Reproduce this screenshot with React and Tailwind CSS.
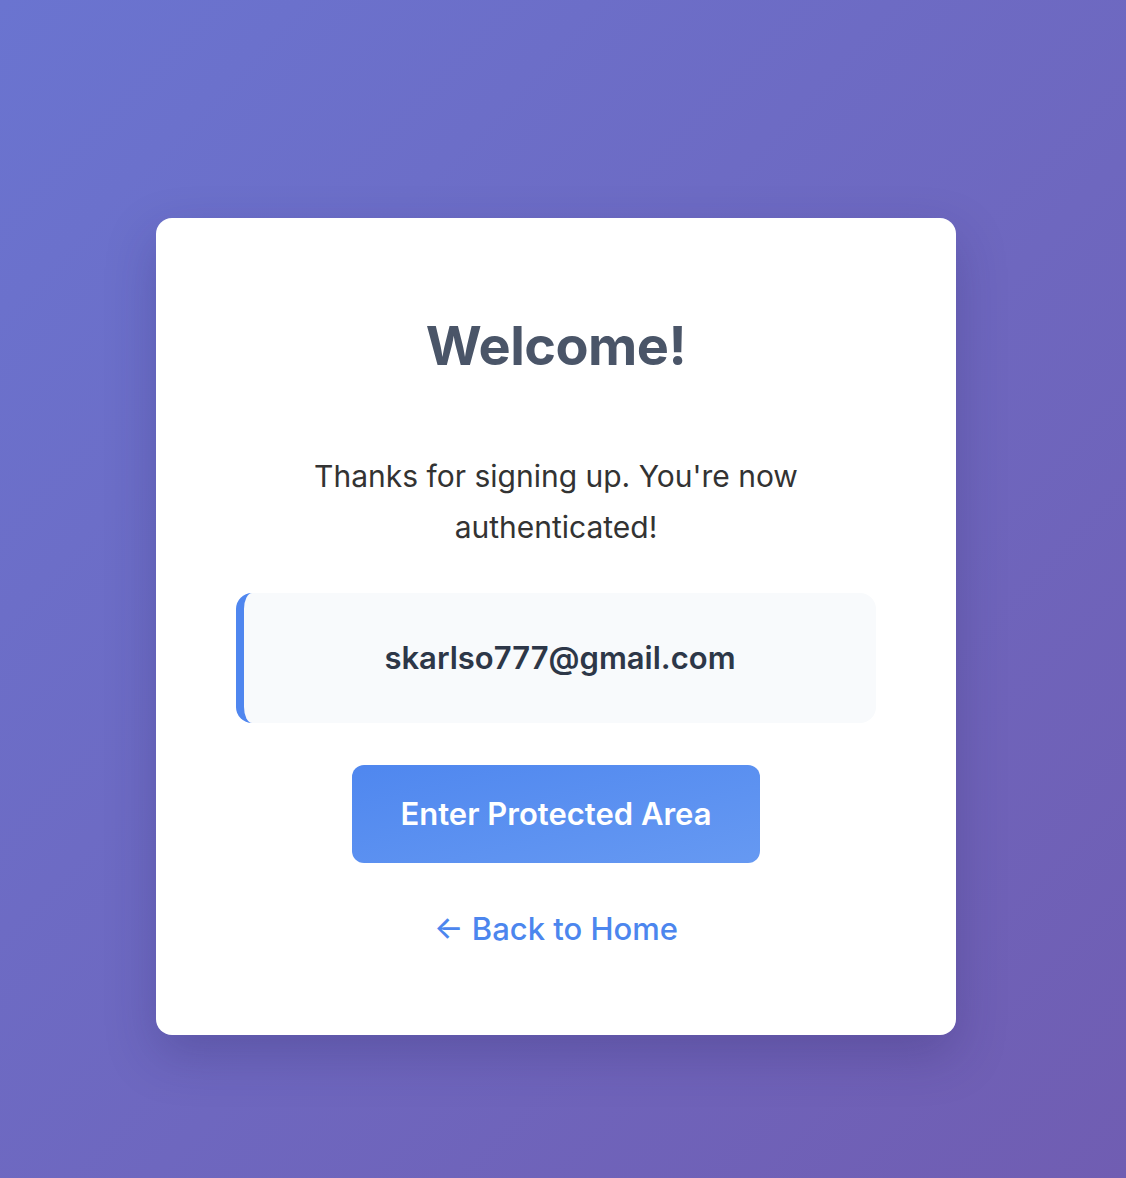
import React from 'react';

function App() {
    return (
        <div
            className="min-h-screen w-full flex justify-center items-start pt-[218px] pb-[144px] pr-[14px] bg-gradient-to-br from-[#6a74d0] to-[#705db2]"
            style={{ fontFamily: 'Inter, "Noto Sans", sans-serif' }}
        >
            <div className="w-[800px] bg-white rounded-2xl shadow-[0_20px_50px_rgba(40,30,90,0.25)] px-20 pt-[96px] pb-[86px] text-center">
                <h1 className="text-[54px] leading-[1.2] font-bold text-[#4a5568] tracking-[-0.01em]">Welcome!</h1>

                <p className="mt-[72px] text-[30px] leading-[51px] text-[#333333]">
                    Thanks for signing up. You're now authenticated!
                </p>

                <div className="mt-[40px] bg-[#f8fafc] border-l-8 border-[#4f86ef] rounded-2xl py-[45px]">
                    <span className="text-[31px] leading-[40px] font-semibold text-[#2d3748]">skarlso777@gmail.com</span>
                </div>

                <button className="mt-[42px] h-[98px] px-12 rounded-xl bg-gradient-to-br from-[#4f87ef] to-[#6699f2] text-white text-[31px] font-semibold">
                    Enter Protected Area
                </button>

                <div className="mt-[46px]">
                    <a href="#" className="text-[31px] leading-[40px] font-medium text-[#4c86ee]">
                        ← Back to Home
                    </a>
                </div>
            </div>
        </div>
    );
}

export default App;
